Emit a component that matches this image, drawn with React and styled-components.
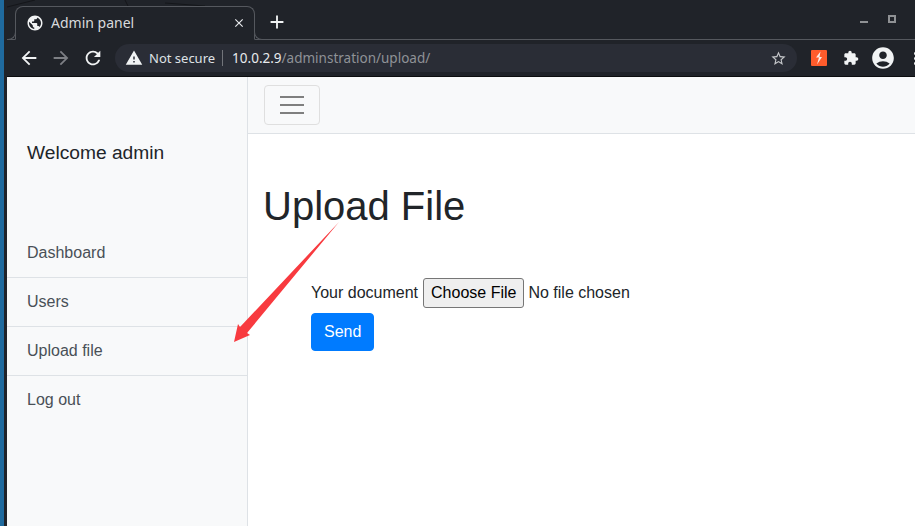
import styled, { createGlobalStyle } from 'styled-components';
import {
  MdAccountCircle,
  MdAdd,
  MdArrowBack,
  MdArrowForward,
  MdClose,
  MdExtension,
  MdPublic,
  MdRefresh,
  MdStarBorder,
  MdWarning,
} from 'react-icons/md';

const links = ['Dashboard', 'Users', 'Upload file', 'Log out'];

function App() {
  return (
    <Desktop>
      <GlobalStyle />
      <BrowserWindow>
        <TabStrip>
          <WallpaperLines viewBox="0 0 240 8">
            <path d="M0 7 28 0M118 0l3 6M158 3l40 3" fill="none" stroke="#14161a" strokeWidth="1" />
          </WallpaperLines>
          <Tab>
            <MdPublic size={18} color="#f1f3f4" />
            <TabTitle>Admin panel</TabTitle>
            <MdClose size={14} color="#e8eaed" />
          </Tab>
          <NewTab>
            <MdAdd size={22} color="#f1f3f4" />
          </NewTab>
          <WindowControls>
            <MinimizeIcon />
            <MaximizeIcon />
          </WindowControls>
        </TabStrip>
        <AddressRow>
          <NavIcons>
            <MdArrowBack size={22} color="#f1f3f4" />
            <MdArrowForward size={22} color="#7d7f84" />
            <MdRefresh size={22} color="#f1f3f4" />
          </NavIcons>
          <Omnibox>
            <WarningIcon size={18} color="#f1f3f4" />
            <SecurityLabel>Not secure</SecurityLabel>
            <Url>
              10.0.2.9<UrlPath>/adminstration/upload/</UrlPath>
            </Url>
            <StarIcon size={17} color="#c4c6c9" />
          </Omnibox>
          <Extensions>
            <svg width="16" height="16" viewBox="0 0 16 16">
              <rect width="16" height="16" rx="1" fill="#ff5c2c" />
              <path d="M9.500 1.500 5 7.500h3L6 14.500l5-7.500H8.500Z" fill="#fbeee8" />
            </svg>
            <MdExtension size={16} color="#f1f3f4" />
            <AvatarIcon size={26} color="#f1f3f4" />
            <MoreDots>
              <Dot />
              <Dot />
              <Dot />
            </MoreDots>
          </Extensions>
        </AddressRow>
        <Page>
          <Sidebar>
            <SidebarHeader>Welcome admin</SidebarHeader>
            <SidebarNav>
              {links.map((link) => (
                <SidebarLink key={link}>{link}</SidebarLink>
              ))}
            </SidebarNav>
          </Sidebar>
          <Main>
            <TopBar>
              <MenuToggle aria-label="Toggle navigation">
                <ToggleBar />
                <ToggleBar />
                <ToggleBar />
              </MenuToggle>
            </TopBar>
            <Content>
              <Title>Upload File</Title>
              <UploadForm>
                <FileRow>
                  <span>Your document</span>
                  <ChooseButton type="button">Choose File</ChooseButton>
                  <span>No file chosen</span>
                </FileRow>
                <SendButton type="button">Send</SendButton>
              </UploadForm>
            </Content>
          </Main>
          <ArrowMark viewBox="0 0 110 125">
            <path d="M106 0 14 111 17 113 1 120 5 102 7 105Z" fill="#f83a3f" />
          </ArrowMark>
        </Page>
      </BrowserWindow>
    </Desktop>
  );
}

export default App;

const GlobalStyle = createGlobalStyle`
  html,
  body {
    margin: 0;
    padding: 0;
    overflow: hidden;
  }

  body {
    font-family: 'Liberation Sans', Arial, sans-serif;
  }
`;

const Desktop = styled.div`
  width: 915px;
  height: 526px;
  padding-left: 4px;
  background: #1f6a9e;
  box-sizing: border-box;
  overflow: hidden;
`;

const BrowserWindow = styled.div`
  display: flex;
  flex-direction: column;
  height: 100%;
  padding-left: 3px;
  background: #202329;
`;

const TabStrip = styled.div`
  position: relative;
  display: flex;
  align-items: flex-end;
  flex-shrink: 0;
  height: 40px;
  padding-left: 8px;
  background: #202329;
  border-bottom: 1px solid #55585e;
  box-sizing: border-box;
`;

const WallpaperLines = styled.svg`
  position: absolute;
  left: 0;
  top: 0;
  width: 240px;
  height: 8px;
`;

const Tab = styled.div`
  position: relative;
  display: flex;
  align-items: center;
  width: 240px;
  height: 34px;
  margin-bottom: -1px;
  padding: 0 8px 0 10px;
  background: #202329;
  border: 1px solid #55585e;
  border-bottom: 1px solid #202329;
  border-radius: 8px 8px 0 0;
  box-sizing: border-box;

  &::before,
  &::after {
    content: '';
    position: absolute;
    bottom: -1px;
    width: 8px;
    height: 8px;
    border-bottom: 1px solid #55585e;
  }

  &::before {
    left: -9px;
    border-right: 1px solid #55585e;
    border-bottom-right-radius: 8px;
  }

  &::after {
    right: -9px;
    border-left: 1px solid #55585e;
    border-bottom-left-radius: 8px;
    background: #202329;
  }
`;

const TabTitle = styled.span`
  flex: 1;
  margin-left: 7px;
  padding-bottom: 2px;
  color: #d8dadc;
  font-family: 'Noto Sans', sans-serif;
  font-size: 14px;
`;

const NewTab = styled.div`
  display: flex;
  align-items: center;
  height: 34px;
  margin-left: 11px;
`;

const WindowControls = styled.div`
  display: flex;
  align-items: center;
  gap: 20px;
  height: 40px;
  margin-left: auto;
  padding-right: 19px;
`;

const MinimizeIcon = styled.span`
  width: 8px;
  height: 2px;
  margin-top: 6px;
  background: #8f9194;
`;

const MaximizeIcon = styled.span`
  width: 8px;
  height: 8px;
  border: 2px solid #8f9194;
  box-sizing: border-box;
`;

const AddressRow = styled.div`
  display: flex;
  align-items: center;
  flex-shrink: 0;
  height: 36px;
  background: #202329;
  border-bottom: 1px solid #0c0d0f;
  overflow: hidden;
`;

const NavIcons = styled.div`
  display: flex;
  align-items: center;
  gap: 10px;
  padding-left: 11px;
`;

const Omnibox = styled.div`
  display: flex;
  align-items: center;
  flex-shrink: 0;
  width: 682px;
  height: 28px;
  margin-left: 11px;
  padding: 0 10px;
  background: #2a2d36;
  border-radius: 14px;
  box-sizing: border-box;
`;

const WarningIcon = styled(MdWarning)`
  flex-shrink: 0;
`;

const SecurityLabel = styled.span`
  margin-left: 6px;
  padding-right: 7px;
  color: #dfe1e5;
  font-family: 'Noto Sans', sans-serif;
  font-size: 13px;
  line-height: 16px;
  border-right: 1px solid #72747a;
`;

const Url = styled.span`
  margin-left: 9px;
  color: #e8eaed;
  font-family: 'Noto Sans', sans-serif;
  font-size: 13.500px;
`;

const UrlPath = styled.span`
  color: #8f9297;
`;

const StarIcon = styled(MdStarBorder)`
  margin-left: auto;
`;

const Extensions = styled.div`
  display: flex;
  align-items: center;
  flex-shrink: 0;
  gap: 16px;
  margin-left: 14px;
`;

const AvatarIcon = styled(MdAccountCircle)`
  margin-left: -5px;
`;

const MoreDots = styled.div`
  display: flex;
  flex-direction: column;
  gap: 2px;
  margin-left: 2px;
`;

const Dot = styled.span`
  width: 3px;
  height: 3px;
  background: #f1f3f4;
  border-radius: 50%;
`;

const Page = styled.div`
  position: relative;
  display: flex;
  flex: 1;
  min-height: 0;
  background: #fff;
`;

const Sidebar = styled.div`
  flex-shrink: 0;
  width: 240px;
  background: #f8f9fa;
  border-right: 1px solid #dee2e6;
  box-sizing: content-box;
`;

const SidebarHeader = styled.h3`
  margin: 0;
  padding: 65px 20px 65px;
  color: #212529;
  font-size: 19.200px;
  font-weight: 400;
  line-height: 22px;
`;

const SidebarNav = styled.div`
  display: flex;
  flex-direction: column;
`;

const SidebarLink = styled.a`
  display: block;
  height: 49px;
  padding: 0 20px;
  color: #495057;
  font-size: 16px;
  line-height: 48px;
  box-sizing: border-box;
  border-bottom: 1px solid #dee2e6;

  &:last-child {
    border-bottom: 0;
  }
`;

const Main = styled.div`
  flex: 1;
  min-width: 0;
`;

const TopBar = styled.div`
  display: flex;
  align-items: center;
  height: 57px;
  padding-left: 16px;
  background: #f8f9fa;
  border-bottom: 1px solid #dee2e6;
  box-sizing: border-box;
`;

const MenuToggle = styled.button`
  display: flex;
  flex-direction: column;
  align-items: center;
  justify-content: center;
  gap: 6px;
  width: 56px;
  height: 40px;
  padding: 0;
  background: transparent;
  border: 1px solid #dfdfdf;
  border-radius: 4px;
`;

const ToggleBar = styled.span`
  width: 24px;
  height: 2px;
  background: #7f7f7f;
`;

const Content = styled.div`
  padding: 48px 15px 0;
`;

const Title = styled.h1`
  margin: 0;
  color: #212529;
  font-size: 40px;
  font-weight: 400;
  line-height: 48px;
`;

const UploadForm = styled.form`
  display: flex;
  flex-direction: column;
  align-items: flex-start;
  gap: 5px;
  margin-top: 48px;
  padding-left: 48px;
`;

const FileRow = styled.div`
  display: flex;
  align-items: center;
  gap: 4px;
  color: #212529;
  font-size: 16px;
`;

const ChooseButton = styled.button`
  height: 30px;
  margin-left: 1px;
  padding: 0 7px;
  color: #000;
  background: #efefef;
  border: 1px solid #767676;
  border-radius: 3px;
  font-family: 'Liberation Sans', Arial, sans-serif;
  font-size: 16px;
`;

const SendButton = styled.button`
  height: 38px;
  padding: 0 12px;
  color: #fff;
  background: #007bff;
  border: 1px solid #007bff;
  border-radius: 4px;
  font-family: 'Liberation Sans', Arial, sans-serif;
  font-size: 16px;
`;

const ArrowMark = styled.svg`
  position: absolute;
  left: 226px;
  top: 145px;
  width: 110px;
  height: 125px;
`;
